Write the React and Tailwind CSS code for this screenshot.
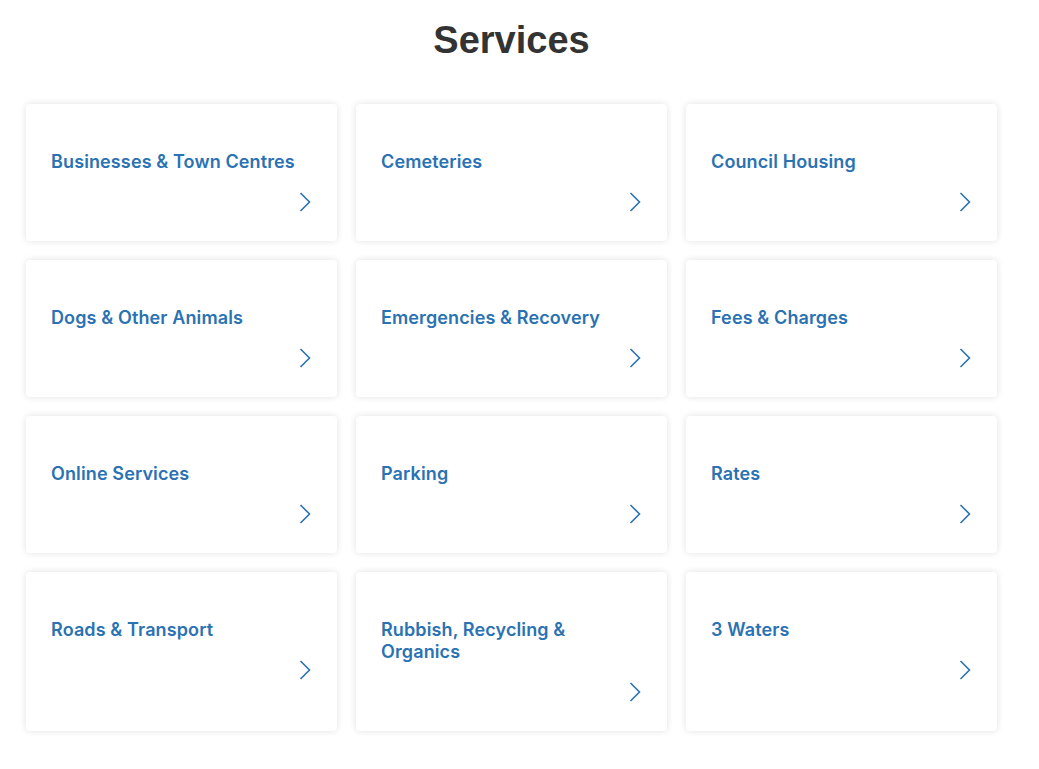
const services = [
  "Businesses & Town Centres",
  "Cemeteries",
  "Council Housing",
  "Dogs & Other Animals",
  "Emergencies & Recovery",
  "Fees & Charges",
  "Online Services",
  "Parking",
  "Rates",
  "Roads & Transport",
  "Rubbish, Recycling & Organics",
  "3 Waters",
];

function Chevron() {
  return (
    <svg width="12" height="20" viewBox="0 0 12 20" fill="none" className="text-[#2a72b3]">
      <path d="M1.5 1 L10.5 10 L1.5 19" stroke="currentColor" strokeWidth="1.6" />
    </svg>
  );
}

function ServiceCard({ title }) {
  return (
    <a
      href="#"
      className="flex flex-col bg-white rounded-[4px] shadow-[0_0_7px_rgba(0,0,0,0.12)] pt-[47px] pb-[29px] pl-[25px] pr-[26px]"
    >
      <span className="font-['Inter',sans-serif] font-semibold text-[18px] leading-[22px] tracking-[0.12px] text-[#2a72b3]">
        {title}
      </span>
      <span className="flex justify-end mt-[19px]">
        <Chevron />
      </span>
    </a>
  );
}

export default function App() {
  return (
    <div className="min-h-[769px] bg-white">
      <section className="w-[971px] ml-[26px] pt-[17px]">
        {/* Titulo */}
        <h2 className="text-center font-['Liberation_Sans',Arial,sans-serif] font-bold text-[38px] leading-[46px] text-[#333333]">
          Services
        </h2>

        {/* Tarjetas */}
        <div className="grid grid-cols-3 gap-[19px] mt-[41px]">
          {services.map((s) => (
            <ServiceCard key={s} title={s} />
          ))}
        </div>
      </section>
    </div>
  );
}
